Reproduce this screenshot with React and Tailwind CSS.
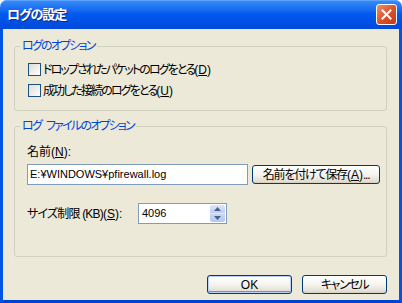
import React from 'react';

const jp = "[font-family:'Liberation_Sans','Noto_Sans_CJK_JP',sans-serif] [font-feature-settings:'palt']";

function Key({ k }) {
  return (
    <span className="tracking-normal">
      (<span className="underline">{k}</span>)
    </span>
  );
}

function Checkbox({ label, mnemonic }) {
  return (
    <div className="flex h-[13px] items-center">
      <span className="h-[13px] w-[13px] border border-[#1C5180] bg-gradient-to-br from-[#DCDCD7] to-white" />
      <span className="ml-[2px] text-[12px] leading-[14px] tracking-[-1.9px] text-black">
        {label}
        <Key k={mnemonic} />
      </span>
    </div>
  );
}

function XpButton({ children, className = '', isDefault = false }) {
  return (
    <button
      className={`flex h-[19px] items-center justify-center rounded-[3px] border border-[#003C74] bg-gradient-to-b from-white via-[#F5F4EF] to-[#DCD8CB] text-[12px] leading-[14px] text-black ${
        isDefault ? 'shadow-[inset_0_0_0_1px_#B9D1F6,inset_0_-1px_0_1px_#6D8FE0]' : 'shadow-[inset_0_-1px_0_0_#D6D0C5]'
      } ${className}`}
    >
      {children}
    </button>
  );
}

function GroupBox({ title, className = '', children }) {
  return (
    <fieldset className={`ml-[11px] w-[373px] rounded-[3px] border border-[#D0D0BF] ${className}`}>
      <legend className="ml-[5px] px-[2px] text-[12px] leading-[14px] tracking-[-1.8px] text-[#0046D5]">{title}</legend>
      {children}
    </fieldset>
  );
}

export default function App() {
  return (
    <div className={`flex h-[303px] w-[402px] flex-col bg-white ${jp}`}>
      {/* title bar */}
      <div className="flex h-[29px] items-center justify-between rounded-t-[7px] bg-gradient-to-b from-[#3B8CF8] via-[#0058EE] to-[#0049DB] pl-[7px] pr-[5px] shadow-[inset_0_1px_0_#5DA1FF]">
        <span className="text-[13px] font-bold leading-[16px] tracking-[-1px] text-white [text-shadow:1px_1px_0_#0B2A8C]">ログの設定</span>
        <div className="flex h-[21px] w-[21px] items-center justify-center rounded-[3px] border border-white bg-gradient-to-br from-[#EB8E6E] via-[#DC532E] to-[#C23B13]">
          <svg width="11" height="11" viewBox="0 0 11 11">
            <path d="M1.5 1.5 L9.5 9.5 M9.5 1.5 L1.5 9.5" stroke="white" strokeWidth="2" strokeLinecap="square" />
          </svg>
        </div>
      </div>

      {/* body */}
      <div className="flex flex-1 flex-col border-x-[3px] border-b-[3px] border-x-[#0055E5] border-b-[#0042D4] bg-[#ECE9D8]">
        <GroupBox title="ログのオプション" className="mt-[10px] h-[72px]">
          <div className="mt-[10px] flex flex-col gap-[8px] pl-[13px]">
            <Checkbox label="ドロップされたパケットのログをとる" mnemonic="D" />
            <Checkbox label="成功した接続のログをとる" mnemonic="U" />
          </div>
        </GroupBox>

        <GroupBox
          title={
            <>
              ログ<span className="ml-[5px]">ファイルのオプション</span>
            </>
          }
          className="mt-[8px] h-[138px]"
        >
          <div className="flex flex-col pl-[12px]">
            <div className="mt-[12px] text-[12px] leading-[14px] text-black">
              名前<Key k="N" />:
            </div>
            <div className="mt-[5px] flex items-center gap-[4px]">
              <div className="flex h-[21px] w-[221px] items-center border border-[#7F9DB9] bg-white pl-[2px] text-[11px] text-black">
                E:¥WINDOWS¥pfirewall.log
              </div>
              <XpButton className="w-[128px] tracking-[-1.2px]">
                名前を付けて保存<Key k="A" />...
              </XpButton>
            </div>
            <div className="mt-[18px] flex items-center">
              <div className="w-[111px] text-[12px] leading-[14px] tracking-[-0.8px] text-black">
                サイズ制限 (KB)<Key k="S" />:
              </div>
              <div className="flex h-[21px] w-[89px] items-stretch border border-[#7F9DB9] bg-white p-[1px]">
                <span className="flex flex-1 items-center pl-[2px] text-[11px] text-black">4096</span>
                <div className="flex w-[15px] flex-col">
                  <div className="flex flex-1 items-center justify-center rounded-t-[2px] border-b border-b-[#F3E8C8] bg-gradient-to-b from-[#DCE6FA] to-[#BCCEF5]">
                    <svg width="7" height="4" viewBox="0 0 7 4"><path d="M0 4 L3.5 0 L7 4 Z" fill="#4D6185" /></svg>
                  </div>
                  <div className="flex flex-1 items-center justify-center rounded-b-[2px] bg-gradient-to-b from-[#C8D6F7] to-[#B4C8F2]">
                    <svg width="7" height="4" viewBox="0 0 7 4"><path d="M0 0 L7 0 L3.5 4 Z" fill="#4D6185" /></svg>
                  </div>
                </div>
              </div>
            </div>
          </div>
        </GroupBox>

        <div className="mt-[18px] flex justify-end gap-[10px] pr-[12px]">
          <XpButton className="w-[85px]" isDefault>OK</XpButton>
          <XpButton className="w-[85px] tracking-[-1.4px]">キャンセル</XpButton>
        </div>
      </div>
    </div>
  );
}
